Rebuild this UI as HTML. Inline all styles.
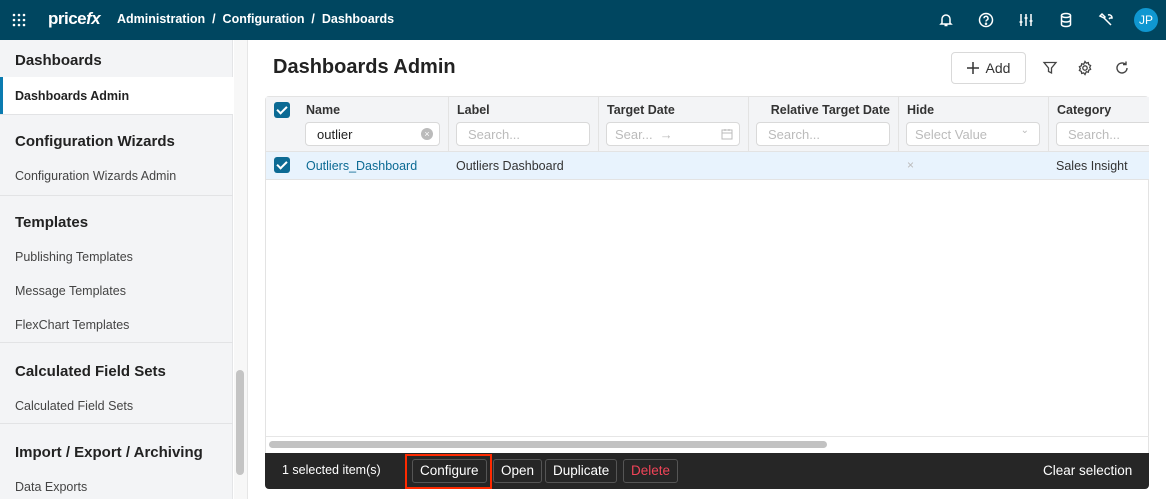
<!DOCTYPE html>
<html><head><meta charset="utf-8"><style>
*{box-sizing:border-box;margin:0;padding:0}
body{width:1166px;height:499px;overflow:hidden;font-family:"Liberation Sans",sans-serif;background:#fff;position:relative;color:#222}
.top{position:absolute;left:0;top:0;width:1166px;height:40px;background:#004660;color:#fff}
.abs{position:absolute}
.side{position:absolute;left:0;top:40px;width:233px;height:459px;background:#f3f4f6;border-right:1px solid #e4e5e7}
.sh{position:absolute;left:15px;font-size:15px;font-weight:bold;color:#222}
.si{position:absolute;left:15px;font-size:12.5px;color:#444}
.sep{position:absolute;left:0;width:233px;height:1px;background:#e2e3e5}
.track{position:absolute;left:234px;top:40px;width:14px;height:459px;background:#f7f7f7;border-right:1px solid #e6e6e6}
.th{position:absolute;top:0;height:55px;border-right:1px solid #e3e3e3;font-size:12.5px;font-weight:bold;color:#333}
.th span{position:absolute;left:8px;top:6px}
.inp{position:absolute;left:7px;top:25px;right:8px;height:24px;border:1px solid #d9d9d9;border-radius:4px;background:#fff;font-size:13px;font-weight:normal;color:#bbb;padding:4px 11px}
.cb{position:absolute;width:16px;height:16px;background:#0b6a94;border-radius:3px}
.cb:after{content:"";position:absolute;left:5px;top:2px;width:4px;height:8px;border:solid #fff;border-width:0 2px 2px 0;transform:rotate(45deg)}
.btn{position:absolute;top:459px;height:24px;border:1px solid #555;border-radius:3px;color:#fff;font-size:13.5px;padding:3px 7px;background:#262626}
</style></head><body>
<div class="top">
 <svg class="abs" style="left:12px;top:13px" width="14" height="14"><g fill="#fff"><circle cx="2" cy="2" r="1.3"/><circle cx="7" cy="2" r="1.3"/><circle cx="12" cy="2" r="1.3"/><circle cx="2" cy="7" r="1.3"/><circle cx="7" cy="7" r="1.3"/><circle cx="12" cy="7" r="1.3"/><circle cx="2" cy="12" r="1.3"/><circle cx="7" cy="12" r="1.3"/><circle cx="12" cy="12" r="1.3"/></g></svg>
 <div class="abs" style="left:48px;top:9px;font-size:17px;font-weight:bold;letter-spacing:-0.5px">price<i>fx</i></div>
 <div class="abs" style="left:117px;top:12px;font-size:12.5px;font-weight:bold">Administration &nbsp;/&nbsp; Configuration &nbsp;/&nbsp; Dashboards</div>
 <svg class="abs" style="left:938px;top:12px" width="16" height="16" fill="none" stroke="#fff" stroke-width="1.5"><path d="M4 11V7a4 4 0 018 0v4l1 1H3z M6.5 13.5h3"/></svg>
 <svg class="abs" style="left:978px;top:12px" width="16" height="16" fill="none" stroke="#fff" stroke-width="1.5"><circle cx="8" cy="8" r="6.5"/><path d="M6 6.3a2 2 0 113 1.7c-.8.4-1 .8-1 1.5"/><circle cx="8" cy="11.7" r=".5"/></svg>
 <svg class="abs" style="left:1018px;top:12px" width="16" height="16" fill="none" stroke="#fff" stroke-width="1.5"><path d="M3 2v12M8 2v12M13 2v12"/><path d="M1.5 10h3M6.5 6h3M11.5 9h3"/></svg>
 <svg class="abs" style="left:1058px;top:12px" width="16" height="16" fill="none" stroke="#fff" stroke-width="1.5"><ellipse cx="8" cy="3.5" rx="4.5" ry="2"/><path d="M3.5 3.5v9c0 1.1 2 2 4.5 2s4.5-.9 4.5-2v-9M3.5 8c0 1.1 2 2 4.5 2s4.5-.9 4.5-2"/></svg>
 <svg class="abs" style="left:1098px;top:12px" width="16" height="16" fill="none" stroke="#fff" stroke-width="1.5"><path d="M2 4l2-2 3 3-1 1zM6 6l7 7M10 3a3 3 0 014 3l-2 0-1 1"/></svg>
 <div class="abs" style="left:1134px;top:8px;width:24px;height:24px;border-radius:50%;background:#0f97d1;font-size:12px;text-align:center;line-height:24px">JP</div>
</div>
<div class="side">
 <div class="sh" style="top:12px">Dashboards</div>
 <div class="abs" style="left:0;top:37px;width:233px;height:37px;background:#fff;border-left:3px solid #0b7bb0"></div>
 <div class="si" style="top:49px;font-weight:bold;color:#222">Dashboards Admin</div>
 <div class="sep" style="top:74px"></div>
 <div class="sh" style="top:93px">Configuration Wizards</div>
 <div class="si" style="top:129px">Configuration Wizards Admin</div>
 <div class="sep" style="top:155px"></div>
 <div class="sh" style="top:174px">Templates</div>
 <div class="si" style="top:210px">Publishing Templates</div>
 <div class="si" style="top:244px">Message Templates</div>
 <div class="si" style="top:278px">FlexChart Templates</div>
 <div class="sep" style="top:302px"></div>
 <div class="sh" style="top:323px">Calculated Field Sets</div>
 <div class="si" style="top:359px">Calculated Field Sets</div>
 <div class="sep" style="top:383px"></div>
 <div class="sh" style="top:404px">Import / Export / Archiving</div>
 <div class="si" style="top:440px">Data Exports</div>
</div>
<div class="track"><div class="abs" style="left:2px;top:330px;width:8px;height:105px;background:#c4c4c4;border-radius:4px"></div></div>

<div class="abs" style="left:273px;top:56px;font-size:20px;font-weight:bold;color:#222">Dashboards Admin</div>
<div class="abs" style="left:951px;top:52px;width:75px;height:32px;border:1px solid #d9d9d9;border-radius:4px;font-size:14px;color:#333;display:flex;align-items:center;justify-content:center;gap:7px"><svg width="12" height="12" stroke="#333" stroke-width="1.5"><path d="M6 0v12M0 6h12"/></svg>Add</div>
<svg class="abs" style="left:1042px;top:60px" width="16" height="16" fill="none" stroke="#444" stroke-width="1.3"><path d="M2 2.5h12l-4.5 5.5v5l-3-1.5v-3.5z"/></svg>
<svg class="abs" style="left:1077px;top:60px" width="16" height="16" fill="none" stroke="#444" stroke-width="1.3"><circle cx="8" cy="8" r="2.2"/><path d="M8 1.5l1.3 1.6 2-.5.4 2 1.9.9-.9 1.9.9 1.9-1.9.9-.4 2-2-.5L8 14.5l-1.3-1.6-2 .5-.4-2-1.9-.9.9-1.9-.9-1.9 1.9-.9.4-2 2 .5z"/></svg>
<svg class="abs" style="left:1114px;top:60px" width="16" height="16" fill="none" stroke="#444" stroke-width="1.4"><path d="M13 8a5 5 0 11-1.5-3.6M12 1.5v3h-3"/></svg>

<div class="abs" style="left:265px;top:96px;width:884px;height:393px;border:1px solid #e3e3e3;border-radius:4px"></div>
<div class="abs" style="left:266px;top:97px;width:883px;height:84px;overflow:hidden">
 <div class="abs" style="left:0;top:0;width:883px;height:55px;background:#f3f4f6;border-bottom:1px solid #e3e3e3"></div>
 <div class="cb" style="left:8px;top:5px"></div>
 <div class="th" style="left:32px;width:151px"><span>Name</span><div class="inp" style="color:#222">outlier<span style="position:absolute;left:auto;right:6px;top:5px;width:12px;height:12px;border-radius:50%;background:#bbb;color:#fff;font-size:9px;text-align:center;line-height:12px">×</span></div></div>
 <div class="th" style="left:183px;width:150px"><span>Label</span><div class="inp">Search...</div></div>
 <div class="th" style="left:333px;width:150px"><span>Target Date</span><div class="inp" style="padding-left:8px">Sear... &nbsp;→<svg style="position:absolute;right:6px;top:5px" width="12" height="12" fill="none" stroke="#bbb"><rect x="1" y="2" width="10" height="9"/><path d="M1 5h10M4 1v2M8 1v2"/></svg></div></div>
 <div class="th" style="left:483px;width:150px"><span style="left:auto;right:8px">Relative Target Date</span><div class="inp">Search...</div></div>
 <div class="th" style="left:633px;width:150px"><span>Hide</span><div class="inp" style="padding-left:8px">Select Value<span style="position:absolute;left:auto;right:10px;top:2px;font-size:10px">⌄</span></div></div>
 <div class="th" style="left:783px;width:120px;border:none"><span>Category</span><div class="inp" style="right:-10px">Search...</div></div>
 <div class="abs" style="left:0;top:55px;width:883px;height:28px;background:#e8f3fd;border-bottom:1px solid #e3e3e3"></div>
 <div class="cb" style="left:8px;top:60px"></div>
 <div class="abs" style="left:40px;top:62px;font-size:12.5px;color:#0b6a94">Outliers_Dashboard</div>
 <div class="abs" style="left:190px;top:62px;font-size:12.5px;color:#333">Outliers Dashboard</div>
 <div class="abs" style="left:641px;top:61px;font-size:12px;color:#bbb">×</div>
 <div class="abs" style="left:790px;top:62px;font-size:12.5px;color:#333">Sales Insight</div>
</div>
<div class="abs" style="left:266px;top:436px;width:883px;height:1px;background:#e6e6e6"></div>
<div class="abs" style="left:269px;top:441px;width:558px;height:7px;border-radius:4px;background:#c2c2c2"></div>

<div class="abs" style="left:265px;top:453px;width:884px;height:36px;background:#262626;border-radius:0 0 4px 4px"></div>
<div class="abs" style="left:282px;top:463px;font-size:12.5px;color:#fff">1 selected item(s)</div>
<div class="abs" style="left:405px;top:454px;width:87px;height:35px;border:2px solid #ff2a00"></div>
<div class="btn" style="left:412px">Configure</div>
<div class="btn" style="left:493px">Open</div>
<div class="btn" style="left:545px">Duplicate</div>
<div class="btn" style="left:623px;color:#f04458">Delete</div>
<div class="abs" style="left:1043px;top:463px;font-size:13.5px;color:#fff">Clear selection</div>
</body></html>
